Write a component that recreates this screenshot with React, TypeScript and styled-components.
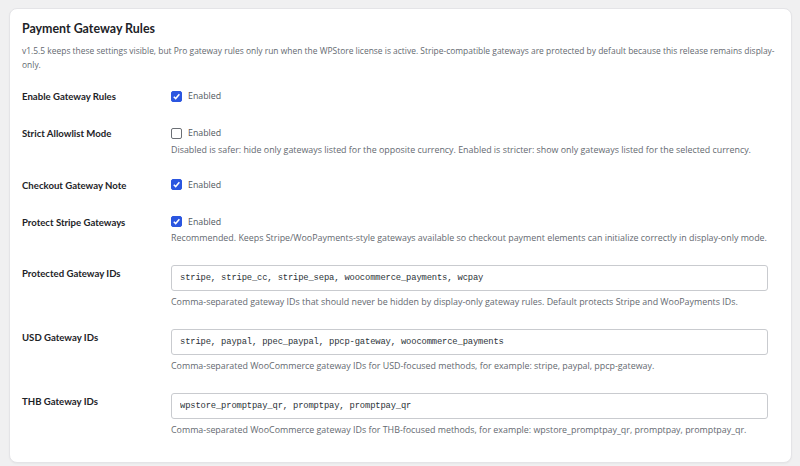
import styled, { createGlobalStyle } from 'styled-components';

const GlobalStyle = createGlobalStyle`
  html, body {
    margin: 0;
    padding: 0;
    background: #f0f0f1;
  }
  body {
    font-family: 'Open Sans', 'Noto Sans', Arial, sans-serif;
    color: #1d2327;
  }
`;

type CheckRow = {
  kind: 'check';
  label: string;
  checked: boolean;
  help?: string;
};

type InputRow = {
  kind: 'input';
  label: string;
  value: string;
  help: string;
};

const rows: (CheckRow | InputRow)[] = [
  { kind: 'check', label: 'Enable Gateway Rules', checked: true },
  {
    kind: 'check',
    label: 'Strict Allowlist Mode',
    checked: false,
    help: 'Disabled is safer: hide only gateways listed for the opposite currency. Enabled is stricter: show only gateways listed for the selected currency.',
  },
  { kind: 'check', label: 'Checkout Gateway Note', checked: true },
  {
    kind: 'check',
    label: 'Protect Stripe Gateways',
    checked: true,
    help: 'Recommended. Keeps Stripe/WooPayments-style gateways available so checkout payment elements can initialize correctly in display-only mode.',
  },
  {
    kind: 'input',
    label: 'Protected Gateway IDs',
    value: 'stripe, stripe_cc, stripe_sepa, woocommerce_payments, wcpay',
    help: 'Comma-separated gateway IDs that should never be hidden by display-only gateway rules. Default protects Stripe and WooPayments IDs.',
  },
  {
    kind: 'input',
    label: 'USD Gateway IDs',
    value: 'stripe, paypal, ppec_paypal, ppcp-gateway, woocommerce_payments',
    help: 'Comma-separated WooCommerce gateway IDs for USD-focused methods, for example: stripe, paypal, ppcp-gateway.',
  },
  {
    kind: 'input',
    label: 'THB Gateway IDs',
    value: 'wpstore_promptpay_qr, promptpay, promptpay_qr',
    help: 'Comma-separated WooCommerce gateway IDs for THB-focused methods, for example: wpstore_promptpay_qr, promptpay, promptpay_qr.',
  },
];

export default function App() {
  return (
    <>
      <GlobalStyle />
      <Page>
        <Card>
          <Title>Payment Gateway Rules</Title>
          <Intro>
            v1.5.5 keeps these settings visible, but Pro gateway rules only run when the WPStore license is active.
            Stripe-compatible gateways are protected by default because this release remains display-only.
          </Intro>
          {rows.map((row) => (
            <Row key={row.label}>
              <Label>{row.label}</Label>
              <Field>
                {row.kind === 'check' ? (
                  <CheckLine>
                    <Box $checked={row.checked}>
                      {row.checked && (
                        <svg width="9" height="9" viewBox="0 0 10 10">
                          <path d="M2 5.2 L4.1 7.3 L8.2 2.6" fill="none" stroke="#fff" strokeWidth="1.7" />
                        </svg>
                      )}
                    </Box>
                    <CheckText>Enabled</CheckText>
                  </CheckLine>
                ) : (
                  <TextInput type="text" defaultValue={row.value} />
                )}
                {row.help && <Help $input={row.kind === 'input'}>{row.help}</Help>}
              </Field>
            </Row>
          ))}
        </Card>
      </Page>
    </>
  );
}

const Page = styled.div`
  padding: 8px 8px 6px 9px;
`;

const Card = styled.div`
  background: #fff;
  border: 1px solid #e4e4e7;
  border-radius: 8px;
  box-shadow: 0 1px 2px rgba(0, 0, 0, 0.04);
  padding: 11px 12px 15px 12px;
`;

const Title = styled.h2`
  margin: 0;
  font-family: Lato, 'Open Sans', sans-serif;
  font-size: 12.4px;
  line-height: 18px;
  font-weight: 700;
  color: #1d2327;
`;

const Intro = styled.p`
  margin: 6px 0 6px;
  font-size: 8.45px;
  line-height: 14px;
  color: #646970;
`;

const Row = styled.div`
  display: grid;
  grid-template-columns: 149px 1fr;
  padding: 10px 0;
`;

const Label = styled.div`
  font-family: Lato, 'Open Sans', sans-serif;
  font-size: 9.6px;
  font-weight: 700;
  line-height: 16px;
  color: #1d2327;
  padding-top: 1px;
`;

const Field = styled.div`
  display: flex;
  flex-direction: column;
  min-width: 0;
  padding-right: 11px;
`;

const CheckLine = styled.label`
  display: flex;
  align-items: center;
  gap: 6px;
  height: 16px;
`;

const Box = styled.span<{ $checked: boolean }>`
  display: inline-flex;
  align-items: center;
  justify-content: center;
  width: 11px;
  height: 11px;
  box-sizing: border-box;
  border-radius: 2px;
  background: ${({ $checked }) => ($checked ? '#2b56e0' : '#fff')};
  border: 1px solid ${({ $checked }) => ($checked ? '#2b56e0' : '#6b6f75')};
`;

const CheckText = styled.span`
  font-size: 8.8px;
  color: #50575e;
`;

const TextInput = styled.input`
  box-sizing: border-box;
  width: 100%;
  height: 26px;
  margin: 0;
  padding: 0 8px;
  border: 1px solid #c9cbcf;
  border-radius: 3px;
  background: #fff;
  font-family: 'Liberation Mono', 'DejaVu Sans Mono', monospace;
  font-size: 8.8px;
  letter-spacing: -0.14px;
  color: #2c3338;
  outline: none;
`;

const Help = styled.p<{ $input?: boolean }>`
  margin: ${({ $input }) => ($input ? '4px' : '1.5px')} 0 0;
  font-size: 8.9px;
  line-height: 14px;
  color: #646970;
`;
